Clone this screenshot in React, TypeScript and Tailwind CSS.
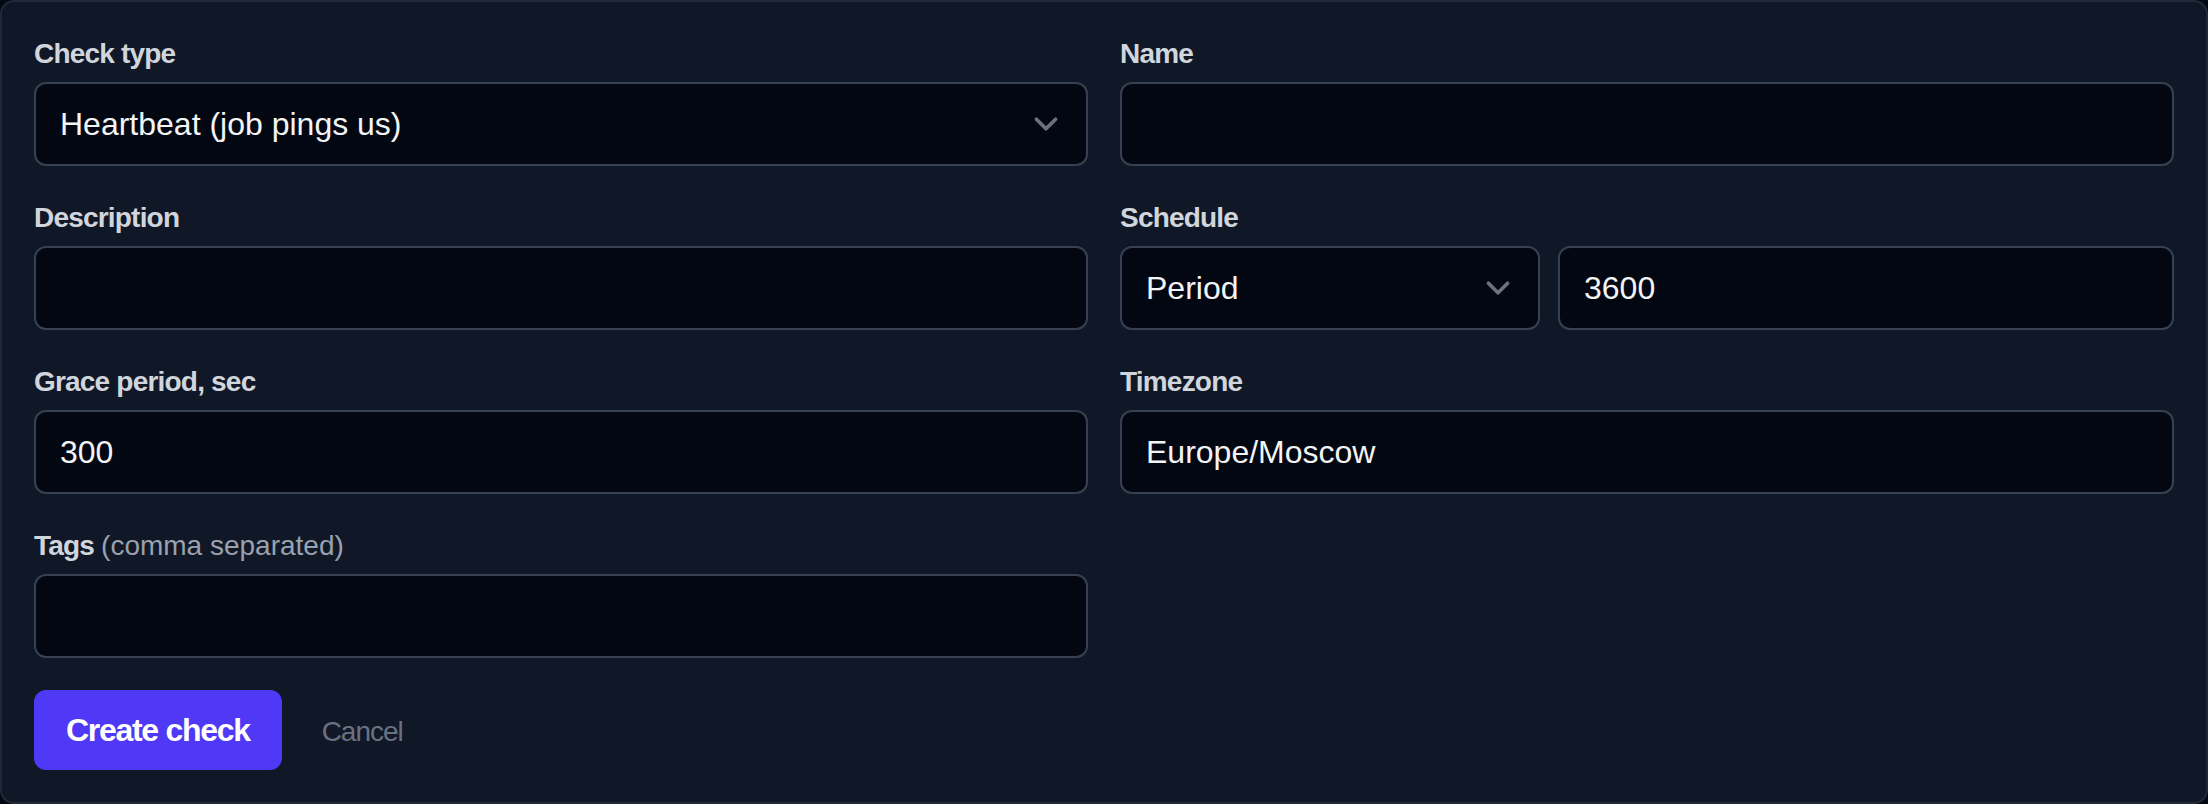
import type { ReactNode } from "react";

function Chevron() {
  return (
    <svg viewBox="0 0 20 20" fill="none" className="w-[48px] h-[48px] shrink-0">
      <path d="M6 8l4 4 4-4" stroke="#6b7280" strokeWidth="1.5" strokeLinecap="round" strokeLinejoin="round" />
    </svg>
  );
}

function Field({ label, children }: { label: ReactNode; children: ReactNode }) {
  return (
    <div className="flex flex-col">
      <label className="text-[28px] leading-[40px] font-semibold text-gray-300 tracking-[-0.8px] mb-2">{label}</label>
      {children}
    </div>
  );
}

function Input({ value = "" }: { value?: string }) {
  return (
    <div className="h-[84px] w-full flex items-center rounded-[12px] border-2 border-gray-700 bg-gray-950 px-6 text-[32px] text-gray-100">
      {value}
    </div>
  );
}

function Select({ value, className = "w-full" }: { value: string; className?: string }) {
  return (
    <div className={`${className} h-[84px] flex items-center justify-between rounded-[12px] border-2 border-gray-700 bg-gray-950 pl-6 pr-4 text-[32px] text-gray-100`}>
      <span>{value}</span>
      <Chevron />
    </div>
  );
}

export default function App() {
  return (
    <div className="min-h-screen bg-gray-950 font-['Liberation_Sans',Arial,sans-serif]">
      <form className="h-[804px] rounded-[14px] border-2 border-gray-800 bg-gray-900 p-8">
        <div className="grid grid-cols-2 gap-8">
          <Field label="Check type">
            <Select value="Heartbeat (job pings us)" />
          </Field>
          <Field label="Name">
            <Input />
          </Field>

          <Field label="Description">
            <Input />
          </Field>
          <Field label="Schedule">
            <div className="flex gap-[18px]">
              <Select value="Period" className="w-[420px] shrink-0" />
              <div className="flex-1">
                <Input value="3600" />
              </div>
            </div>
          </Field>

          <Field label="Grace period, sec">
            <Input value="300" />
          </Field>
          <Field label="Timezone">
            <Input value="Europe/Moscow" />
          </Field>

          <Field
            label={
              <>
                Tags <span className="font-normal text-gray-400 tracking-normal">(comma separated)</span>
              </>
            }
          >
            <Input />
          </Field>
        </div>

        <div className="flex items-center gap-6 mt-8">
          <button type="button" className="h-[80px] px-8 rounded-[12px] bg-indigo-600 text-[32px] font-semibold text-white tracking-[-1.3px]">
            Create check
          </button>
          <button type="button" className="px-4 text-[28px] leading-[40px] text-gray-500 tracking-[-1px] mt-1">
            Cancel
          </button>
        </div>
      </form>
    </div>
  );
}
